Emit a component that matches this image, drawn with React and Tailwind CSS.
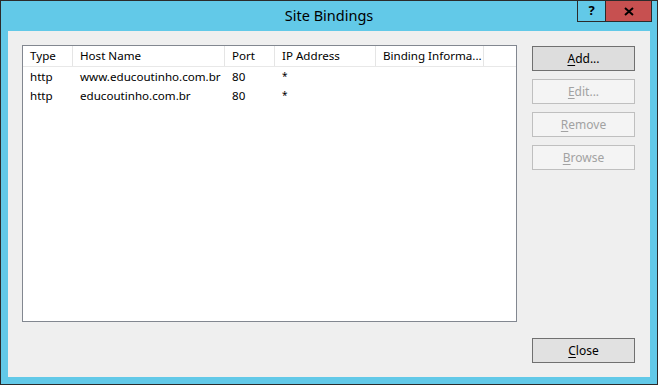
import React from 'react';

const columns = [
  { label: 'Type', width: 'w-[50px]' },
  { label: 'Host Name', width: 'w-[152px]' },
  { label: 'Port', width: 'w-[50px]' },
  { label: 'IP Address', width: 'w-[101px]' },
  { label: 'Binding Informa...', width: 'w-[108px]' },
];

const bindings = [
  { type: 'http', host: 'www.educoutinho.com.br', port: '80', ip: '*' },
  { type: 'http', host: 'educoutinho.com.br', port: '80', ip: '*' },
];

const DialogButton = ({ accel, rest, primary = false, disabled = false }) => (
  <button
    disabled={disabled}
    className={`w-[103px] h-[25px] border text-[12px] leading-none flex items-center justify-center ${
      disabled
        ? 'bg-[#f4f4f4] border-[#bfbfbf] text-[#a2a2a2]'
        : primary
        ? 'bg-[#dddddd] border-[#707070] text-black'
        : 'bg-[#e1e1e1] border-[#707070] text-black'
    }`}
  >
    <span className="underline underline-offset-2">{accel}</span>
    <span>{rest}</span>
  </button>
);

export default function App() {
  return (
    <div
      className="w-[658px] h-[385px] bg-[#62c9e8] border border-[#2b2b2b] flex flex-col"
      style={{ fontFamily: '"Noto Sans", "Segoe UI", sans-serif' }}
    >
      <div className="relative h-[30px] flex items-center justify-center shrink-0">
        <span className="text-[14.5px] text-black">Site Bindings</span>
        <div className="absolute right-[5px] top-[-1px] flex">
          <div className="w-[29px] h-[22px] border border-[#2b2b2b] flex items-center justify-center text-[13px] font-bold text-black">
            ?
          </div>
          <div className="w-[46px] h-[22px] bg-[#c75050] border border-l-0 border-[#2b2b2b] flex items-center justify-center">
            <svg width="10" height="9" viewBox="0 0 10 9">
              <path d="M1 1 L9 8 M9 1 L1 8" stroke="#000" strokeWidth="2" />
            </svg>
          </div>
        </div>
      </div>

      <div className="flex-1 mx-[7px] mb-[7px] bg-[#efefef] flex pl-[14px] pt-[14px] pr-[15px] pb-[14px] gap-[15px]">
        <div className="w-[495px] h-[277px] bg-white border border-[#828790] text-[11.6px] text-black">
          <div className="flex h-[21px] border-b border-[#e8e8e8]">
            {columns.map((c) => (
              <div
                key={c.label}
                className={`${c.width} border-r border-[#e5e5e5] pl-[7px] flex items-center whitespace-nowrap overflow-hidden`}
              >
                {c.label}
              </div>
            ))}
          </div>
          <div>
            {bindings.map((b) => (
              <div key={b.host} className="flex h-[19px] items-center">
                <div className="w-[50px] pl-[7px]">{b.type}</div>
                <div className="w-[152px] pl-[7px]">{b.host}</div>
                <div className="w-[50px] pl-[7px]">{b.port}</div>
                <div className="w-[101px] pl-[7px] text-[10px]">{b.ip}</div>
              </div>
            ))}
          </div>
        </div>

        <div className="flex flex-col justify-between pt-[1px]">
          <div className="flex flex-col gap-[8px]">
            <DialogButton accel="A" rest="dd..." primary />
            <DialogButton accel="E" rest="dit..." disabled />
            <DialogButton accel="R" rest="emove" disabled />
            <DialogButton accel="B" rest="rowse" disabled />
          </div>
          <DialogButton accel="C" rest="lose" />
        </div>
      </div>
    </div>
  );
}
